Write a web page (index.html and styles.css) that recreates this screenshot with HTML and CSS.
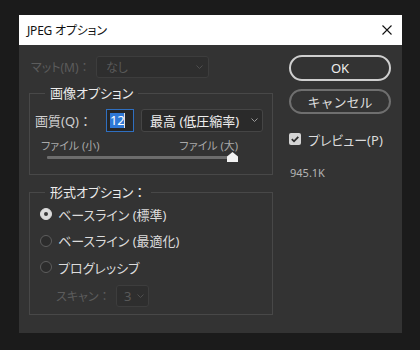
FILE: index.html
```html
<!DOCTYPE html>
<html lang="ja">
<head>
<meta charset="utf-8">
<title>JPEG オプション</title>
<link rel="stylesheet" href="styles.css">
</head>
<body>
<div class="dialog">
  <div class="titlebar">
    <span class="title">JPEG オプション</span>
    <svg class="close" width="10" height="10" viewBox="0 0 10 10"><path d="M0.5 0.5L9.5 9.5M9.5 0.5L0.5 9.5" stroke="#111" stroke-width="1.1" fill="none"/></svg>
  </div>
  <div class="content">
    <div class="left">
      <div class="matte-row">
        <span class="label disabled">マット(M)<span class="colon">：</span></span>
        <div class="select matte-select disabled-select">
          <span>なし</span>
          <svg class="chev" width="7" height="4" viewBox="0 0 7 4"><path d="M0.5 0.5L3.5 3.5L6.5 0.5" stroke="#4e4e4e" fill="none"/></svg>
        </div>
      </div>
      <fieldset class="group g1">
        <legend>画像オプション</legend>
        <div class="quality-row">
          <span class="label">画質(Q)<span class="colon">：</span></span>
          <div class="num-input"><span class="sel">12</span><span class="caret"></span></div>
          <div class="select quality-select">
            <span>最高 (低圧縮率)</span>
            <svg class="chev" width="7" height="4" viewBox="0 0 7 4"><path d="M0.5 0.5L3.5 3.5L6.5 0.5" stroke="#9a9a9a" fill="none"/></svg>
          </div>
        </div>
        <div class="size-labels"><span>ファイル (小)</span><span>ファイル (大)</span></div>
        <div class="slider">
          <div class="track"></div>
          <svg class="thumb" width="11" height="10" viewBox="0 0 11 10"><path d="M5.5 0L11 4.5V10H0V4.5Z" fill="#f2f2f2"/></svg>
        </div>
      </fieldset>
      <fieldset class="group g2">
        <legend>形式オプション<span class="colon">：</span></legend>
        <div class="radios">
          <div class="radio-row"><span class="radio checked"></span><span>ベースライン (標準)</span></div>
          <div class="radio-row"><span class="radio"></span><span>ベースライン (最適化)</span></div>
          <div class="radio-row"><span class="radio"></span><span>プログレッシブ</span></div>
        </div>
        <div class="scan-row">
          <span class="label disabled">スキャン<span class="colon">：</span></span>
          <div class="select scan-select disabled-select">
            <span>3</span>
            <svg class="chev" width="7" height="4" viewBox="0 0 7 4"><path d="M0.5 0.5L3.5 3.5L6.5 0.5" stroke="#4e4e4e" fill="none"/></svg>
          </div>
        </div>
      </fieldset>
    </div>
    <div class="right">
      <button class="btn ok">OK</button>
      <button class="btn cancel">キャンセル</button>
      <div class="check-row">
        <span class="checkbox"><svg width="10" height="10" viewBox="0 0 10 10"><path d="M1.8 5.2L4 7.3L8.3 2.8" stroke="#2c2c2c" stroke-width="1.8" fill="none"/></svg></span>
        <span>プレビュー(P)</span>
      </div>
      <div class="filesize">945.1K</div>
    </div>
  </div>
</div>
</body>
</html>
```

FILE: styles.css
```css
html, body {
  margin: 0;
  padding: 0;
  background: #1b1b1b;
}
body {
  padding: 15px 0 0 19px;
  font-family: "Noto Sans", "Noto Sans CJK JP", sans-serif;
  font-feature-settings: "palt";
}
.colon {
  font-feature-settings: normal;
}
.dialog {
  width: 383px;
  background: #333333;
  box-sizing: border-box;
}
.titlebar {
  height: 30px;
  background: #ffffff;
  display: flex;
  align-items: center;
  justify-content: space-between;
  padding: 0 10px 0 8px;
}
.title {
  font-size: 12px;
  color: #111;
  letter-spacing: -0.2px;
}
.close {
  display: block;
}
.content {
  display: flex;
  gap: 16px;
  padding: 10px 11px 18px 10px;
}
.left {
  width: 244px;
  padding-top: 1px;
}
.right {
  width: 102px;
  display: flex;
  flex-direction: column;
}
.label {
  font-size: 12px;
  color: #d0d0d0;
  white-space: nowrap;
}
.disabled {
  color: #5c5c5c;
}
.matte-row {
  display: flex;
  align-items: center;
  height: 22px;
  padding-left: 2px;
}
.matte-row .label {
  width: 65px;
}
.select {
  display: flex;
  align-items: center;
  justify-content: space-between;
  box-sizing: border-box;
  border-radius: 3px;
}
.chev {
  display: block;
}
.disabled-select {
  background: #2e2e2e;
  border: 1px solid #3d3d3d;
  color: #595959;
  font-size: 12px;
}
.matte-select {
  width: 113px;
  height: 22px;
  padding: 0 5px 0 9px;
}
.group {
  margin: 0;
  padding: 0;
  border: 1px solid #484848;
  min-width: 0;
}
.group legend {
  margin-left: 15px;
  padding: 0 5px;
  font-size: 13px;
  line-height: 18px;
  color: #ececec;
}
.g1 {
  margin-top: 6px;
  padding: 6px 0 12px 0;
}
.quality-row {
  display: flex;
  align-items: center;
  height: 24px;
  padding-left: 5px;
}
.quality-row .label {
  width: 71px;
  font-size: 13px;
}
.num-input {
  width: 28px;
  height: 23px;
  box-sizing: border-box;
  border: 1px solid #2f6fc0;
  background: #262626;
  display: flex;
  align-items: center;
  padding-left: 3px;
  font-size: 13px;
}
.sel {
  background: #2f78d6;
  color: #ffffff;
  line-height: 15px;
  letter-spacing: -0.3px;
}
.caret {
  width: 1px;
  height: 15px;
  background: #e0e0e0;
}
.quality-select {
  margin-left: 7px;
  width: 122px;
  height: 23px;
  background: #2a2a2a;
  border: 1px solid #454545;
  color: #eeeeee;
  font-size: 13px;
  padding: 0 4px 0 8px;
}
.size-labels {
  display: flex;
  justify-content: space-between;
  margin-top: 7px;
  padding: 0 34px 0 11px;
  font-size: 11px;
  line-height: 13px;
  color: #a9a9a9;
}
.slider {
  position: relative;
  height: 10px;
  margin: 0 39px 0 17px;
  display: flex;
  align-items: center;
}
.track {
  flex: 1;
  height: 3px;
  background: #6d6d6d;
  border-radius: 1px;
}
.thumb {
  position: absolute;
  right: -5px;
  top: 0;
}
.g2 {
  margin-top: 8px;
  padding: 3px 0 7px 0;
}
.radios {
  display: flex;
  flex-direction: column;
  gap: 6.5px;
}
.radio-row {
  display: flex;
  align-items: center;
  height: 20px;
  padding-left: 10px;
  gap: 6px;
  font-size: 13px;
  color: #dcdcdc;
}
.radio {
  width: 12px;
  height: 12px;
  box-sizing: border-box;
  border-radius: 50%;
  border: 1px solid #5e5e5e;
  background: #2c2c2c;
  display: flex;
  align-items: center;
  justify-content: center;
}
.radio.checked {
  background: #dcdcdc;
  border-color: #dcdcdc;
}
.radio.checked::after {
  content: "";
  width: 4px;
  height: 4px;
  border-radius: 50%;
  background: #3a3a3a;
}
.scan-row {
  display: flex;
  align-items: center;
  height: 22px;
  margin-top: 8px;
  padding-left: 26px;
}
.scan-row .label {
  width: 60px;
}
.scan-select {
  width: 33px;
  height: 22px;
  padding: 0 4px 0 7px;
  font-size: 13px;
}
.btn {
  font-family: inherit;
  background: transparent;
  border-radius: 13px;
  width: 102px;
  padding: 0;
  margin: 0;
  font-size: 13px;
  color: #eeeeee;
}
.ok {
  height: 26px;
  border: 2px solid #cfcfcf;
}
.cancel {
  height: 25px;
  margin-top: 8px;
  border: 2px solid #6f6f6f;
  color: #dddddd;
}
.check-row {
  display: flex;
  align-items: center;
  gap: 7px;
  margin-top: 19px;
  font-size: 13px;
  color: #dcdcdc;
  height: 12px;
}
.checkbox {
  width: 12px;
  height: 12px;
  border-radius: 2px;
  background: #d4d4d4;
  display: flex;
  align-items: center;
  justify-content: center;
}
.checkbox svg {
  display: block;
}
.filesize {
  margin-top: 20px;
  font-size: 11px;
  color: #b4b4b4;
  padding-left: 1px;
}
```
